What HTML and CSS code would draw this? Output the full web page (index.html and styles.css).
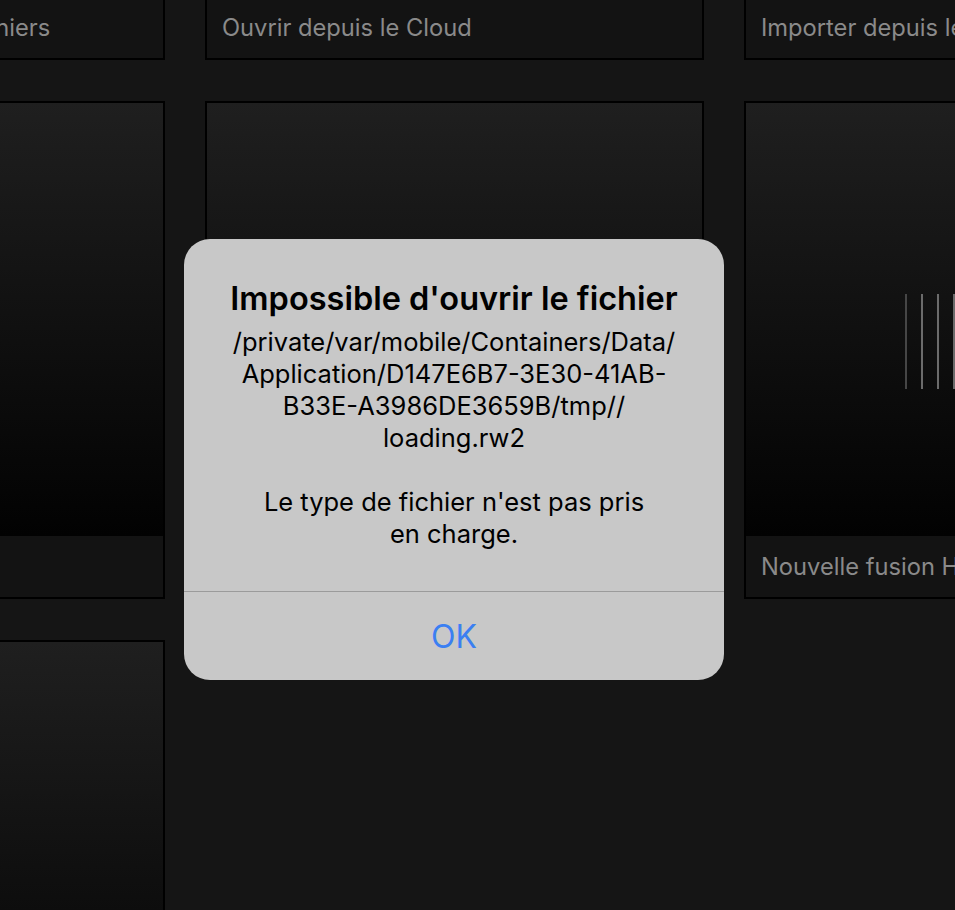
FILE: index.html
```html
<!DOCTYPE html>
<html lang="fr">
<head>
<meta charset="utf-8">
<title>Impossible d'ouvrir le fichier</title>
<link rel="stylesheet" href="styles.css">
</head>
<body>
<main class="grid">
  <div class="card"><div class="thumb"></div><div class="label">Ouvrir dans l'application Fichiers</div></div>
  <div class="card"><div class="thumb"></div><div class="label">Ouvrir depuis le Cloud</div></div>
  <div class="card"><div class="thumb"></div><div class="label">Importer depuis les Photos</div></div>

  <div class="card"><div class="thumb"></div><div class="label"></div></div>
  <div class="card"><div class="thumb"></div><div class="label"></div></div>
  <div class="card"><div class="thumb thumb-lines">
    <div class="lines">
      <span class="ln dim"></span><span class="ln"></span><span class="ln"></span><span class="ln"></span>
      <span class="ln"></span><span class="ln"></span><span class="ln"></span><span class="ln"></span>
      <span class="ln"></span><span class="ln"></span><span class="ln"></span><span class="ln dim"></span>
    </div>
  </div><div class="label">Nouvelle fusion HDR</div></div>

  <div class="card"><div class="thumb"></div><div class="label"></div></div>
  <div class="card card-empty"></div>
  <div class="card card-empty"></div>
</main>

<div class="alert" role="alertdialog">
  <div class="alert-body">
    <h1 class="alert-title">Impossible d'ouvrir le fichier</h1>
    <p class="alert-msg">/private/var/mobile/Containers/Data/<br>Application/D147E6B7-3E30-41AB-<br>B33E-A3986DE3659B/tmp//<br>loading.rw2</p>
    <p class="alert-msg alert-msg-gap">Le type de fichier n'est pas pris<br>en charge.</p>
  </div>
  <div class="alert-actions">
    <button class="alert-btn">OK</button>
  </div>
</div>
</body>
</html>
```

FILE: styles.css
```css
html, body {
  margin: 0;
  padding: 0;
  width: 955px;
  height: 910px;
  overflow: hidden;
  background: #151515;
  font-family: Inter, "Noto Sans", sans-serif;
}

.grid {
  display: grid;
  grid-template-columns: repeat(3, 499px);
  grid-auto-rows: 498px;
  column-gap: 40px;
  row-gap: 41px;
  margin-left: -334px;
  margin-top: -438px;
}

.card {
  border: 2px solid #000;
  display: flex;
  flex-direction: column;
  background: #131313;
}

.card-empty {
  visibility: hidden;
}

.thumb {
  flex: 1;
  background: linear-gradient(to bottom, #1f1f1f 0%, #020202 100%);
}

.thumb-lines {
  display: flex;
  justify-content: center;
  align-items: flex-start;
}

.lines {
  display: flex;
  gap: 14px;
  margin-top: 191px;
}

.ln {
  width: 2px;
  height: 95px;
  background: #6b6b6b;
}

.ln.dim {
  background: #464646;
}

.label {
  height: 61px;
  flex: none;
  padding-left: 15px;
  display: flex;
  align-items: center;
  font-size: 23.7px;
  color: #8a8a8a;
  white-space: nowrap;
  overflow: hidden;
}

.alert {
  position: absolute;
  left: 184px;
  top: 239px;
  width: 540px;
  height: 441px;
  border-radius: 26px;
  background: #c8c8c8;
  display: flex;
  flex-direction: column;
  overflow: hidden;
}

.alert-body {
  flex: 1;
  padding: 38px 20px 0;
  text-align: center;
  color: #000;
}

.alert-title {
  margin: 0 0 5px;
  font-size: 32.5px;
  line-height: 44px;
  font-weight: 600;
}

.alert-msg {
  margin: 0;
  font-size: 25.5px;
  line-height: 32px;
  color: #000;
}

.alert-msg-gap {
  margin-top: 32px;
}

.alert-actions {
  height: 88px;
  border-top: 1px solid #9b9b9b;
  display: flex;
}

.alert-btn {
  flex: 1;
  border: 0;
  background: transparent;
  font-family: inherit;
  font-size: 32px;
  color: #3b7ff2;
  padding: 0;
}
```
